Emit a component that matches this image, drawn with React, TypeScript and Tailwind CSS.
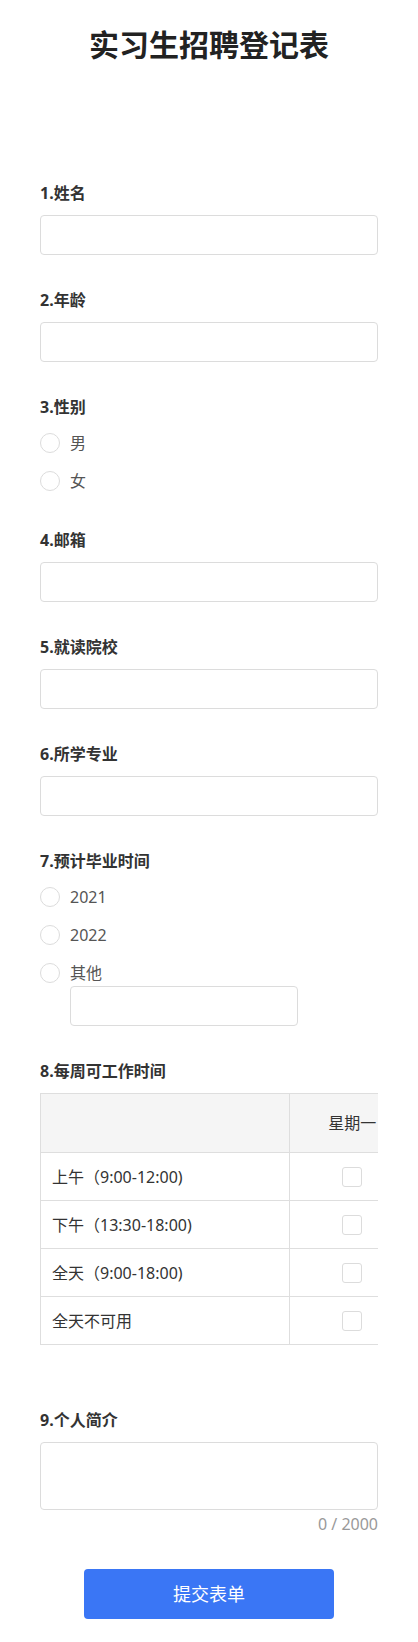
import React from "react";

const font = { fontFamily: '"Noto Sans", "Noto Sans CJK SC", sans-serif' };

function Label({ children }: { children: React.ReactNode }) {
  return <div className="text-[16px] leading-6 font-bold text-[#333]">{children}</div>;
}

function Input({ className = "" }: { className?: string }) {
  return <div className={"h-[40px] w-full rounded-[4px] border border-[#dcdcdc] bg-white " + className} />;
}

function Radio({ text, className = "" }: { text: string; className?: string }) {
  return (
    <div className={"flex h-[38px] items-center " + className}>
      <span className="h-[20px] w-[20px] rounded-full border border-[#dcdcdc] bg-white" />
      <span className="ml-[10px] text-[16px] leading-6 text-[#555]">{text}</span>
    </div>
  );
}

const days = ["星期一", "星期二", "星期三", "星期四", "星期五", "星期六", "星期日"];
const rows = ["上午（9:00-12:00)", "下午（13:30-18:00)", "全天（9:00-18:00)", "全天不可用"];

export default function App() {
  return (
    <div className="min-h-[1642px] bg-white px-10" style={font}>
      <h1 className="pt-[25px] text-center text-[30px] leading-[40px] font-bold text-[#222]">实习生招聘登记表</h1>

      <div className="mt-[116px]">
        <Label>1.姓名</Label>
        <Input className="mt-[10px]" />
      </div>

      <div className="mt-[33px]">
        <Label>2.年龄</Label>
        <Input className="mt-[10px]" />
      </div>

      <div className="mt-[33px]">
        <Label>3.性别</Label>
        <div className="mt-[5px]">
          <Radio text="男" />
          <Radio text="女" />
        </div>
      </div>

      <div className="mt-[28px]">
        <Label>4.邮箱</Label>
        <Input className="mt-[10px]" />
      </div>

      <div className="mt-[33px]">
        <Label>5.就读院校</Label>
        <Input className="mt-[10px]" />
      </div>

      <div className="mt-[33px]">
        <Label>6.所学专业</Label>
        <Input className="mt-[10px]" />
      </div>

      <div className="mt-[33px]">
        <Label>7.预计毕业时间</Label>
        <div className="mt-[5px]">
          <Radio text="2021" />
          <Radio text="2022" />
          <Radio text="其他" />
          <div className="relative -mt-[6px] ml-[30px] h-[40px] w-[228px] rounded-[4px] border border-[#dcdcdc] bg-white" />
        </div>
      </div>

      <div className="mt-[33px]">
        <Label>8.每周可工作时间</Label>
        <div className="mt-[10px] w-full overflow-hidden">
          <table className="border-collapse text-[16px] text-[#333]" style={{ width: 249 + 126 * 7 }}>
            <thead>
              <tr className="h-[59px] bg-[#f5f5f5]">
                <th className="w-[249px] border border-[#dedede]" />
                {days.map((d) => (
                  <th key={d} className="w-[126px] border border-[#dedede] font-normal text-[#333]">
                    {d}
                  </th>
                ))}
              </tr>
            </thead>
            <tbody>
              {rows.map((r) => (
                <tr key={r} className="h-[48px]">
                  <td className="border border-[#dedede] pl-[11px] text-left">{r}</td>
                  {days.map((d) => (
                    <td key={d} className="border border-[#dedede]">
                      <div className="mx-auto h-[20px] w-[20px] rounded-[3px] border border-[#dcdcdc] bg-white" />
                    </td>
                  ))}
                </tr>
              ))}
            </tbody>
          </table>
        </div>
      </div>

      <div className="mt-[63px]">
        <Label>9.个人简介</Label>
        <div className="mt-[10px] h-[68px] w-full rounded-[4px] border border-[#dcdcdc] bg-white" />
        <div className="mt-[2px] text-right text-[16px] leading-6 text-[#999]">0 / 2000</div>
      </div>

      <div className="mt-[33px] flex justify-center pb-[20px]">
        <button className="h-[50px] w-[250px] rounded-[4px] bg-[#3a76f5] text-[18px] text-white">提交表单</button>
      </div>
    </div>
  );
}
